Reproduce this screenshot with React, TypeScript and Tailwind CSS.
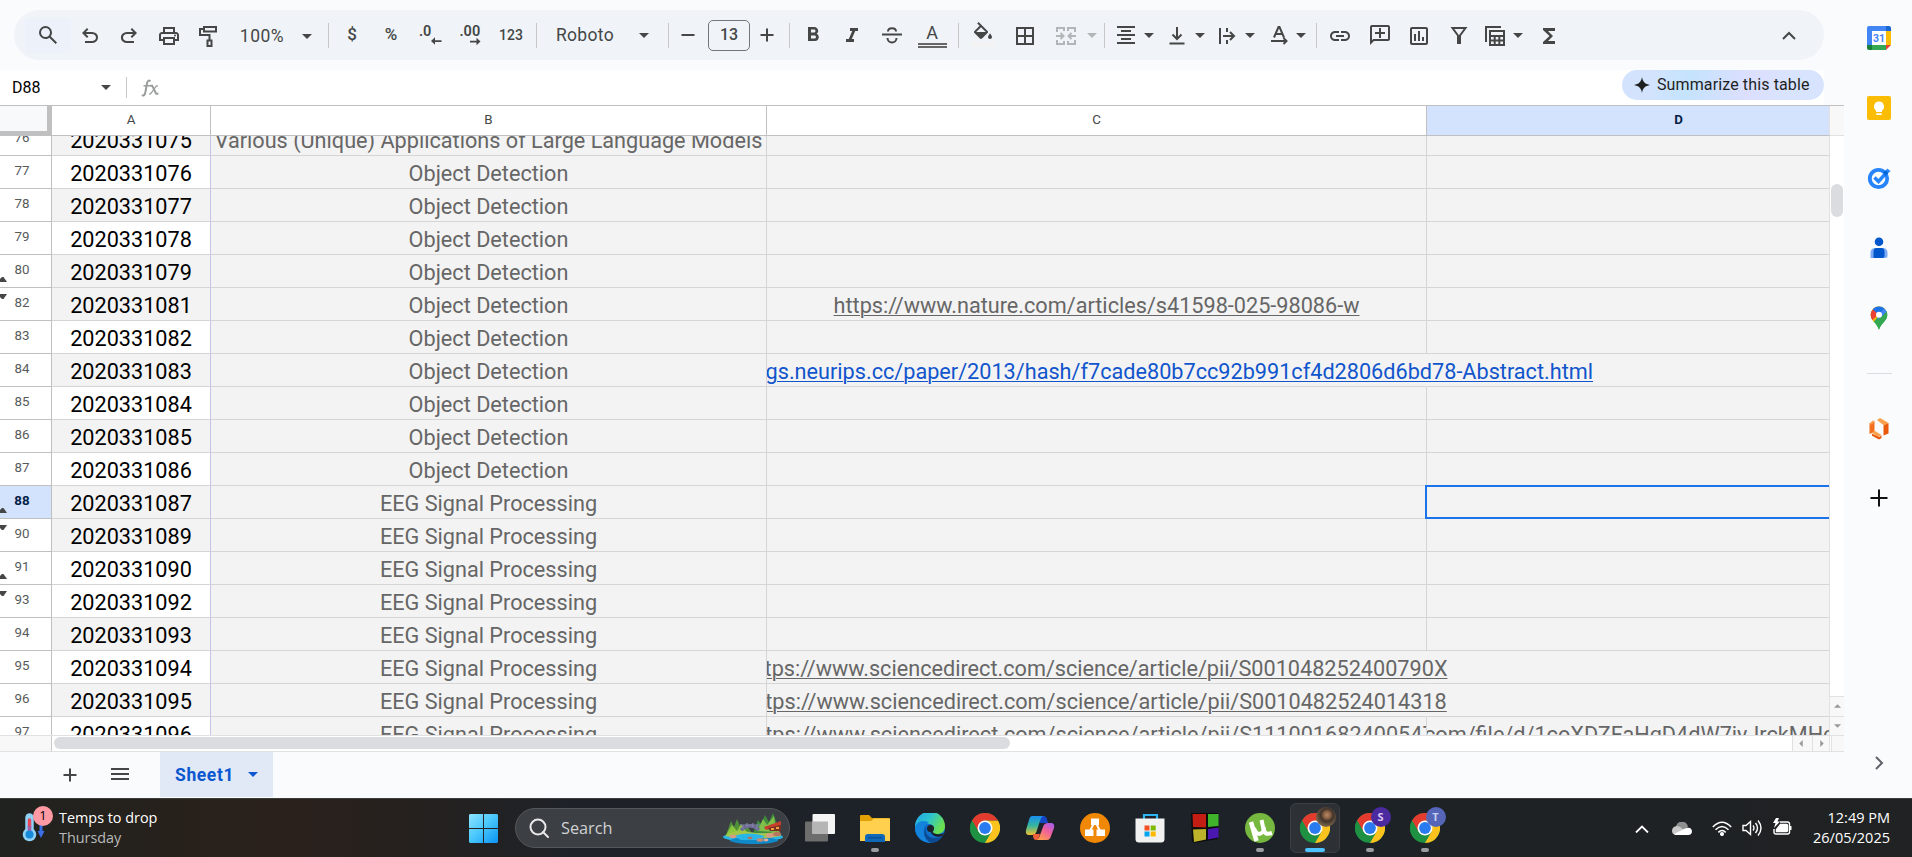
import type { ReactNode } from "react";
import {
  MdOutlinePrint,
  MdBorderAll,
  MdFormatAlignCenter,
  MdLink,
  MdOutlineAddComment,
  MdOutlineInsertChart,
  MdFormatBold,
  MdFormatItalic,
  MdFunctions,
} from "react-icons/md";

/* ---------- toolbar glyphs ---------- */

function Symbol({ d }: { d: string }) {
  return (
    <svg viewBox="0 -960 960 960" className="size-6" fill="currentColor">
      <path d={d} />
    </svg>
  );
}

function Line({ children, className = "size-6" }: { children: ReactNode; className?: string }) {
  return (
    <svg viewBox="0 0 24 24" className={className} fill="none" stroke="currentColor" strokeWidth="2">
      {children}
    </svg>
  );
}

const SEARCH =
  "M784-120 532-372q-30 24-69 38t-83 14q-109 0-184.5-75.5T120-580q0-109 75.5-184.5T380-840q109 0 184.5 75.5T640-580q0 44-14 83t-38 69l252 252-56 56ZM380-400q75 0 127.5-52.5T560-580q0-75-52.5-127.5T380-760q-75 0-127.5 52.5T200-580q0 75 52.5 127.5T380-400Z";
const UNDO =
  "M280-200v-80h284q63 0 109.5-40T720-420q0-60-46.5-100T564-560H312l104 104-56 56-200-200 200-200 56 56-104 104h252q97 0 169.5 63T800-420q0 94-72.5 157T564-200H280Z";
const REDO =
  "M396-200q-97 0-169.5-63T154-420q0-94 72.5-157T396-640h252L544-744l56-56 200 200-200 200-56-56 104-104H396q-63 0-109.5 40T240-420q0 60 46.5 100T396-280h284v80H396Z";

function Caret({ className = "" }: { className?: string }) {
  return (
    <svg viewBox="0 0 10 5" className={`h-[5px] w-[10px] shrink-0 ${className}`} fill="currentColor">
      <path d="M0 0h10L5 5z" />
    </svg>
  );
}

function Item({ className, children }: { className: string; children: ReactNode }) {
  return <div className={`flex shrink-0 items-center justify-center ${className}`}>{children}</div>;
}

function Sep({ className }: { className: string }) {
  return <div className={`h-[25px] w-px shrink-0 bg-[#c7c7c7] ${className}`} />;
}

function Toolbar() {
  return (
    <div className="ml-[14px] flex h-[50px] w-[1810px] items-center rounded-full bg-[#f0f4f9] text-[#444746]">
      <Item className="ml-[11px] h-[35px] w-[46px] bg-[#edf1fa]"><Symbol d={SEARCH} /></Item>
      <Item className="ml-[7px] w-6 pt-[2px]"><Symbol d={UNDO} /></Item>
      <Item className="ml-[15px] w-6 pt-[2px]"><Symbol d={REDO} /></Item>
      <Item className="ml-4 w-6 pt-px"><MdOutlinePrint className="size-6" /></Item>
      <Item className="ml-[15px] w-6 pt-[2px]">
        <Line>
          <path d="M8 3h12v4.500H8zM8 5H4v6h9.500v5M11.500 16.500h4V22h-4z" />
        </Line>
      </Item>
      <Item className="ml-3 w-[60px] pt-[2px] text-[17.500px] tracking-[0.500px]">100%</Item>
      <Caret className="mt-[2px] ml-[10px]" />
      <Sep className="ml-4" />
      <Item className="ml-[11px] w-6 text-[17px] font-medium">$</Item>
      <Item className="ml-[15px] w-6 text-[17px] font-medium">%</Item>
      <Item className="ml-[17px] w-6">
        <svg viewBox="0 0 24 24" className="size-6 overflow-visible" fill="currentColor">
          <text x="-1" y="12.500" fontSize="14.500" fontWeight="600">.0</text>
          <path d="M11 18l4-3.800v3h6.500v1.800H15v2.800z" />
        </svg>
      </Item>
      <Item className="ml-[15px] w-6">
        <svg viewBox="0 0 24 24" className="size-6 overflow-visible" fill="currentColor">
          <text x="0.500" y="12.500" fontSize="14.500" fontWeight="600">.00</text>
          <path d="M21.500 18.500l-4-3.800v3H11v1.800h6.500v2.800z" />
        </svg>
      </Item>
      <Item className="ml-[13px] w-[30px] text-[14px] font-medium">123</Item>
      <Sep className="ml-[10px]" />
      <div className="ml-[19px] w-[62px] shrink-0 text-[17.500px] tracking-[0.300px]">Roboto</div>
      <Caret className="ml-[21px]" />
      <Sep className="ml-[19px]" />
      <Item className="ml-[7px] w-6"><Line><path d="M5.500 12h13" /></Line></Item>
      <Item className="ml-2 h-[31px] w-[42px] rounded-[5px] border border-[#747775] text-[16px] font-medium">13</Item>
      <Item className="ml-[5px] w-6"><Line><path d="M5.500 12h13M12 5.500v13" /></Line></Item>
      <Sep className="ml-[10px]" />
      <Item className="ml-[11px] w-6"><MdFormatBold className="size-6" /></Item>
      <Item className="ml-[15px] w-6 pt-px"><MdFormatItalic className="size-6" /></Item>
      <Item className="ml-4 w-6">
        <Line>
          <path d="M2 11.500h20M8 8.500c0-4.500 8-4.500 8 0M7.500 15c0 6 9 6 9 0" />
        </Line>
      </Item>
      <div className="ml-[13px] flex w-[30px] shrink-0 flex-col items-center">
        <span className="text-[18px] leading-[20px]">A</span>
        <span className="h-[5px] w-[29px] border-y-2 border-[#666]" />
      </div>
      <Sep className="ml-[11px]" />
      <div className="ml-3 flex w-6 shrink-0 flex-col items-center pb-px">
        <svg viewBox="0 0 24 20" className="h-5 w-6" fill="currentColor">
          <path d="M16.560 8.940 7.620 0 6.210 1.410l2.380 2.380-5.150 5.150c-.59.59-.59 1.540 0 2.120l5.500 5.500c.29.29.68.44 1.060.44s.77-.15 1.060-.44l5.500-5.500c.59-.58.59-1.530 0-2.120zM5.210 10 10 5.210 14.790 10H5.210zM19 11.500s-2 2.170-2 3.500c0 1.100.9 2 2 2s2-.9 2-2c0-1.330-2-3.500-2-3.500z" />
        </svg>
        <span className="h-[5px] w-6 bg-[#f3f3f3]" />
      </div>
      <Item className="ml-[18px] w-6 pt-px"><MdBorderAll className="size-6" /></Item>
      <Item className="ml-[17px] w-6 pt-px text-[#b3b6b8]">
        <Line>
          <path d="M3 8V4h7v3M21 8V4h-7v3M3 16v4h7v-3M21 16v4h-7v-3M2 12h7M22 12h-7M6.500 9l3 3-3 3M17.500 9l-3 3 3 3" />
        </Line>
      </Item>
      <Caret className="ml-[9px] text-[#b3b6b8]" />
      <Sep className="ml-[7px]" />
      <Item className="ml-[9px] w-6"><MdFormatAlignCenter className="size-6" /></Item>
      <Caret className="ml-[6px]" />
      <Item className="ml-[11px] w-6">
        <Line>
          <path d="M4.500 20.500h15M12 4v12M7.500 11.500 12 16l4.500-4.500" />
        </Line>
      </Item>
      <Caret className="ml-[6px]" />
      <Item className="ml-[10px] w-6 pt-px">
        <Line>
          <path d="M5 4v16M12 4v4M12 16v4M8 12h11M15 8l4 4-4 4" />
        </Line>
      </Item>
      <Caret className="ml-[6px]" />
      <Item className="ml-3 w-6">
        <Line>
          <path d="M7 14.500 11.500 4h1L17 14.500M8.500 11h7M4 18h15M16.500 15l3 3-3 3" />
        </Line>
      </Item>
      <Caret className="ml-[5px]" />
      <Sep className="ml-[10px]" />
      <Item className="ml-[11px] w-6 pt-px"><MdLink className="size-6" /></Item>
      <Item className="ml-4 w-6"><MdOutlineAddComment className="size-6 -scale-x-100" /></Item>
      <Item className="ml-[15px] w-6 pt-[2px]"><MdOutlineInsertChart className="size-6" /></Item>
      <Item className="ml-4 w-6">
        <Line>
          <path d="M5.500 5h13L13 12.500V20h-2v-7.500z" />
        </Line>
      </Item>
      <Item className="ml-3 w-6 pt-px">
        <Line>
          <path d="M3 18V3h15M7 7h14v14H7zM7 12h14M7 16.500h14M11.700 12v9M16.300 12v9" />
        </Line>
      </Item>
      <Caret className="ml-[6px]" />
      <Item className="ml-[14px] w-6 pt-px"><MdFunctions className="size-6" /></Item>
      <Item className="mr-[23px] ml-auto w-6 pt-px"><Line><path d="M6 15l6-6 6 6" /></Line></Item>
    </div>
  );
}

function FormulaBar() {
  return (
    <div className="mt-[10px] flex h-[35px] w-[1824px] items-center bg-white">
      <span className="ml-3 w-[89px] text-[16px] text-black">D88</span>
      <Caret className="text-[#444746]" />
      <div className="ml-[15px] h-[21px] w-px bg-[#c7c7c7]" />
      <svg viewBox="0 0 18 18" className="mt-px ml-[14px] h-[18px] w-[18px]" fill="none" stroke="#9a9d9c">
        <path d="M9.500 2.200Q6.800.2 6 4.500L4.300 13.500Q3.600 17.400.8 16.200" strokeWidth="2" />
        <path d="M2.500 6.800h6.500" strokeWidth="1.500" />
        <path d="M9 6.800h2.200l4 8h2.200" strokeWidth="2" />
        <path d="M17 6.800h-1.500l-6 8H8" strokeWidth="1.300" />
      </svg>
      <div className="mb-[5px] ml-auto flex h-[30px] w-[202px] items-center rounded-full bg-[linear-gradient(100deg,#d3e3fd_0%,#d3e3fd_15%,#c4e3fd_33%,#dcdffe_62%,#d8e4fe_85%)] pl-[12px]">
        <svg viewBox="0 0 16 16" className="size-4" fill="#1f1f1f">
          <path d="M8 0c.8 4.800 3.200 7.200 8 8-4.800.8-7.200 3.200-8 8-.8-4.800-3.200-7.200-8-8 4.800-.8 7.200-3.200 8-8z" />
        </svg>
        <span className="ml-[7px] text-[16px] tracking-[0.120px] whitespace-nowrap text-[#1f1f1f]">Summarize this table</span>
      </div>
    </div>
  );
}

/* ---------- grid ---------- */

type Row = {
  n: number;
  id: string;
  topic: string;
  link?: string;
  blue?: boolean;
  d?: string;
  hidden?: "after" | "before";
};

const OD = "Object Detection";
const EEG = "EEG Signal Processing";

const ROWS: Row[] = [
  { n: 76, id: "2020331075", topic: "Various (Unique) Applications of Large Language Models" },
  { n: 77, id: "2020331076", topic: OD },
  { n: 78, id: "2020331077", topic: OD },
  { n: 79, id: "2020331078", topic: OD },
  { n: 80, id: "2020331079", topic: OD, hidden: "after" },
  { n: 82, id: "2020331081", topic: OD, hidden: "before", link: "https://www.nature.com/articles/s41598-025-98086-w" },
  { n: 83, id: "2020331082", topic: OD },
  {
    n: 84,
    id: "2020331083",
    topic: OD,
    blue: true,
    link: "https://proceedings.neurips.cc/paper/2013/hash/f7cade80b7cc92b991cf4d2806d6bd78-Abstract.html",
  },
  { n: 85, id: "2020331084", topic: OD },
  { n: 86, id: "2020331085", topic: OD },
  { n: 87, id: "2020331086", topic: OD },
  { n: 88, id: "2020331087", topic: EEG, hidden: "after" },
  { n: 90, id: "2020331089", topic: EEG, hidden: "before" },
  { n: 91, id: "2020331090", topic: EEG, hidden: "after" },
  { n: 93, id: "2020331092", topic: EEG, hidden: "before" },
  { n: 94, id: "2020331093", topic: EEG },
  { n: 95, id: "2020331094", topic: EEG, link: "https://www.sciencedirect.com/science/article/pii/S001048252400790X" },
  { n: 96, id: "2020331095", topic: EEG, link: "https://www.sciencedirect.com/science/article/pii/S0010482524014318" },
  {
    n: 97,
    id: "2020331096",
    topic: EEG,
    link: "https://www.sciencedirect.com/science/article/pii/S1110016824005477",
    d: "com/file/d/1coXDZFaHgD4dW7iyJrckMHg",
  },
];

function GridRow({ row }: { row: Row }) {
  const active = row.n === 88;
  const spills = !!row.link && !row.d && row.n !== 82;
  return (
    <div className="flex h-[33px] shrink-0 text-[21.670px] leading-[35px]">
      <div
        className={`relative w-[52px] shrink-0 border-r border-b border-[#c0c0c0] pr-[7px] text-center text-[13.330px] leading-[30px] ${
          active ? "bg-[#d3e3fd] font-bold text-[#041e49]" : "bg-white text-[#575a5a]"
        }`}
      >
        {row.n}
        {row.hidden === "after" && (
          <svg viewBox="0 0 7 5" className="absolute bottom-[5px] left-0 h-[5px] w-[7px]" fill="#444746">
            <path d="M0 2 2 0h1.500L7 5H0z" />
          </svg>
        )}
        {row.hidden === "before" && (
          <svg viewBox="0 0 7 5" className="absolute top-[6px] left-0 h-[5px] w-[7px]" fill="#444746">
            <path d="M0 0h7L3.500 5H2L0 3z" />
          </svg>
        )}
      </div>
      <div
        className={`w-[159px] shrink-0 border-r border-b border-r-[#c3c4e6] border-b-[#d5d5d5] text-center text-black ${
          row.n % 2 === 0 ? "bg-[#f3f3f3]" : "bg-white"
        }`}
      >
        {row.id}
      </div>
      <div className="w-[556px] shrink-0 overflow-hidden border-r border-b border-[#d5d5d5] bg-[#f3f3f3] text-center whitespace-nowrap text-[#666]">
        {row.topic}
      </div>
      <div
        className={`z-10 flex w-[660px] shrink-0 justify-center border-r border-b border-b-[#d5d5d5] whitespace-nowrap ${
          spills ? "border-r-transparent [clip-path:inset(0_-300px_0_0)]" : "overflow-hidden border-r-[#d5d5d5]"
        } ${row.blue ? "text-[#1155cc]" : "text-[#666]"}`}
      >
        <span className="underline decoration-1 underline-offset-[2px]">{row.link}</span>
      </div>
      <div className="min-w-0 flex-1 overflow-hidden border-b border-[#d5d5d5] whitespace-nowrap text-[#666]">
        <span className="-ml-[3px]">{row.d}</span>
      </div>
    </div>
  );
}

function ColumnHeaders() {
  return (
    <div className="flex h-[31px] shrink-0 border-t border-[#c0c0c0] bg-white text-[13.330px] leading-[28px] text-[#444746]">
      <div className="w-[52px] shrink-0 border-r-[5px] border-b-[5px] border-[#c0c0c0] bg-[#f8f9fa]" />
      <div className="w-[159px] shrink-0 border-r border-b border-[#c0c0c0] text-center">A</div>
      <div className="w-[556px] shrink-0 border-r border-b border-[#c0c0c0] text-center">B</div>
      <div className="w-[660px] shrink-0 border-r border-b border-[#c0c0c0] text-center">C</div>
      <div className="flex w-[403px] shrink-0 overflow-hidden border-r border-b border-r-[#e1e1e1] border-b-[#c0c0c0] bg-[#d3e3fd]">
        <span className="w-[503px] shrink-0 text-center font-bold text-[#041e49]">D</span>
      </div>
      <div className="flex-1 border-b border-[#e1e1e1] bg-[#f8f8f8]" />
    </div>
  );
}

function Grid() {
  return (
    <div className="flex h-[647px] w-[1844px] flex-col">
      <ColumnHeaders />
      <div className="flex h-[599px] shrink-0">
        <div className="relative flex w-[1830px] shrink-0 flex-col overflow-hidden border-r border-[#e1e1e1] bg-[#f3f3f3]">
          <div className="-mt-[13px] flex flex-col">
            {ROWS.map((r) => (
              <GridRow key={r.n} row={r} />
            ))}
          </div>
          <div className="absolute top-[349px] left-[1425px] z-20 h-[34px] w-[420px] border-2 border-[#1a73e8]" />
        </div>
        <div className="flex flex-1 flex-col items-center bg-white">
          <div className="mt-12 h-[33px] w-3 rounded-full bg-[#dadce0]" />
          <div className="mt-auto flex h-5 w-full items-center justify-center border-t border-[#e1e1e1] bg-[#f8f8f8] pb-[2px]">
            <svg viewBox="0 0 8 4" className="h-1 w-[7px]" fill="#999"><path d="M0 4h8L4 0z" /></svg>
          </div>
          <div className="flex h-[19px] w-full items-center justify-center border-t border-[#e1e1e1] bg-[#f8f8f8]">
            <svg viewBox="0 0 8 4" className="h-1 w-[7px]" fill="#999"><path d="M0 0h8L4 4z" /></svg>
          </div>
        </div>
      </div>
      <div className="flex h-[17px] shrink-0 border-y border-[#e1e1e1] bg-white">
        <div className="w-[52px] shrink-0 border-r border-[#c8c8c8] bg-[#f8f8f8]" />
        <div className="mt-px ml-[2px] h-3 w-[956px] rounded-full bg-[#dadce0]" />
        <div className="ml-auto flex w-5 items-center justify-center border-l border-[#e1e1e1] bg-[#f8f8f8] pr-[3px]">
          <svg viewBox="0 0 4 8" className="h-[7px] w-1" fill="#999"><path d="M4 0v8L0 4z" /></svg>
        </div>
        <div className="flex w-[18px] items-center justify-center border-x border-[#e1e1e1] bg-[#f8f8f8] pl-px">
          <svg viewBox="0 0 4 8" className="h-[7px] w-1" fill="#999"><path d="M0 0v8l4-4z" /></svg>
        </div>
        <div className="ml-px w-[13px] border-l border-[#e1e1e1] bg-[#f8f8f8]" />
      </div>
    </div>
  );
}

function SheetTabs() {
  return (
    <div className="flex h-[46px] items-start text-[#444746]">
      <svg viewBox="0 0 24 24" className="mt-[11px] ml-[58px] size-6" stroke="currentColor" strokeWidth="2"><path d="M5.500 12h13M12 5.500v13" /></svg>
      <svg viewBox="0 0 24 24" className="mt-[10px] ml-[26px] size-6" stroke="currentColor" strokeWidth="1.800"><path d="M3 7h18M3 12h18M3 17h18" /></svg>
      <div className="ml-[28px] flex h-[45px] w-[113px] items-center bg-[#e1e9f7] text-[#0b57d0]">
        <span className="ml-[15px] w-[73px] pt-px text-[17.500px] font-bold tracking-[0.600px]">Sheet1</span>
        <Caret />
      </div>
    </div>
  );
}

/* ---------- side panel ---------- */

function SidePanel() {
  return (
    <div className="flex w-[68px] flex-col items-center pt-[26px] pl-[2px]">
      <svg viewBox="0 0 24 24" className="size-6">
        <path fill="#fff" d="M5 5h14v14H5z" />
        <path fill="#4285f4" d="M2 0h17v5H5v14H0V2q0-2 2-2z" />
        <path fill="#1967d2" d="M19 0h3q2 0 2 2v3h-5z" />
        <path fill="#fbbc04" d="M19 5h5v14h-5z" />
        <path fill="#34a853" d="M5 19h14v5H5z" />
        <path fill="#188038" d="M0 19h5v5H2q-2 0-2-2z" />
        <path fill="#ea4335" d="M19 19h5l-5 5z" />
        <text x="12" y="15.800" textAnchor="middle" fontSize="10.500" fontWeight="700" fill="#4285f4">31</text>
      </svg>
      <svg viewBox="0 0 24 24" className="mt-[46px] size-6">
        <rect width="24" height="24" rx="2" fill="#fbbc04" />
        <path fill="#fff" d="M12 5.500a5 5 0 0 1 3 9V16H9v-1.500a5 5 0 0 1 3-9zM9.300 17.200h5.400V19H9.300z" />
      </svg>
      <svg viewBox="0 0 24 24" className="mt-[46px] size-6">
        <circle cx="11.500" cy="12.500" r="8.700" fill="none" stroke="#2684fc" strokeWidth="3.800" />
        <path d="M7.500 11.500l4 4L20 6" fill="none" stroke="#2684fc" strokeWidth="3.400" />
        <path d="M16 6.500l3-2.500 2.500 2.500-3 3.500z" fill="#0066da" />
        <path d="M20 2.500 23.500 5l-2 2-2.500-2.500z" fill="#2684fc" />
      </svg>
      <svg viewBox="0 0 24 24" className="mt-[46px] size-6">
        <circle cx="12" cy="5.800" r="4.300" fill="#0057cc" />
        <path fill="#7baaf7" d="M3.500 22v-5q0-5 5-5h7q5 0 5 5v3q0 2-2 2z" />
        <path fill="#0057cc" d="M6.500 22v-6q0-4 3-4h5q3 0 3 4v4q0 2-2 2z" />
      </svg>
      <svg viewBox="0 0 24 24" className="mt-[46px] size-6">
        <clipPath id="pin">
          <path d="M12 .5a8.300 8.300 0 0 1 8.300 8.300c0 6-6 8-8.300 15-2.300-7-8.300-9-8.300-15A8.300 8.300 0 0 1 12 .5z" />
        </clipPath>
        <g clipPath="url(#pin)">
          <path fill="#34a853" d="M0 0h24v24H0z" />
          <path fill="#fbbc04" d="M12 8.500 20 0 0 0v24l14-17z" />
          <path fill="#ea4335" d="M0 0h8l4 8-7.500 7H0z" />
          <path fill="#1a73e8" d="M5.500 3 12 9l8-9H5z" />
          <path fill="#4285f4" d="M17.500 2 12 9l-2 5L22 5z" />
          <path fill="#34a853" d="M20.500 4.500 6 21l6 3 12-12z" />
        </g>
        <circle cx="12" cy="8.700" r="3" fill="#fff" />
      </svg>
      <div className="mt-[43px] h-px w-[25px] bg-[#dadce0]" />
      <svg viewBox="0 0 24 24" className="mt-[43px] size-6">
        <path fill="#f4701f" d="M2.500 6.500 7.500 4v11L2.500 17z" />
        <path fill="#fb9d4b" d="M2.500 6.500 6.500 3v3L3 8z" />
        <path fill="#f9a14a" d="M10 3l3-2 8.500 5-4.500 2.500z" />
        <path fill="#e8590c" d="M16.500 8.500 21.500 6v10.500l-5 2z" />
        <path fill="#f9a14a" d="M5 15.500 8 14l6.500 4-3.500 2z" />
        <path fill="#e8590c" d="M5 16.500 12 20l2.500-1.500v2.500L12 22.500l-7-3.700z" />
      </svg>
      <svg viewBox="0 0 24 24" className="mt-[45px] size-6" stroke="#111" strokeWidth="2"><path d="M3.500 12h17M12 3.500v17" /></svg>
      <svg viewBox="0 0 24 24" className="mt-auto mb-[23px] size-6" fill="none" stroke="#5f6368" strokeWidth="2"><path d="M9 6l6 6-6 6" /></svg>
    </div>
  );
}

/* ---------- taskbar ---------- */

function Chrome() {
  return (
    <svg viewBox="0 0 30 30" className="size-[30px]">
      <circle cx="15" cy="15" r="15" fill="#1e9143" />
      <path fill="#fcc31e" d="M15 7.500h13a15 15 0 0 1-13 22.500l6.500-11.250z" />
      <path fill="#e33b2e" d="M2 7.500a15 15 0 0 1 26 0H15L8.500 18.750z" />
      <path fill="#1e9143" d="M2 7.500 8.500 18.750 15 22.500 11 29.500A15 15 0 0 1 2 7.500z" />
      <circle cx="15" cy="15" r="7.500" fill="#fff" />
      <circle cx="15" cy="15" r="5.900" fill="#2a7bf0" />
    </svg>
  );
}

function Task({ children, mark, active }: { children: ReactNode; mark?: boolean; active?: boolean }) {
  return (
    <div className="flex w-[55px] shrink-0 justify-center">
      <div
        className={`relative mt-[4px] flex size-[50px] items-center justify-center rounded-md border ${
          active ? "border-[#3b3f44] bg-[#2d3136]" : "border-transparent"
        }`}
      >
        {children}
        {(mark || active) && (
          <span
            className={`absolute bottom-0 left-1/2 h-1 -translate-x-1/2 rounded-full ${active ? "w-5 bg-[#4cc2ff]" : "w-2 bg-[#9a9c9e]"}`}
          />
        )}
      </div>
    </div>
  );
}

function Profile({ className, children }: { className: string; children?: ReactNode }) {
  return (
    <span className={`absolute top-[3px] right-[3px] flex size-5 items-center justify-center overflow-hidden rounded-full text-[11px] font-bold ${className}`}>
      {children}
    </span>
  );
}

function Scene() {
  return (
    <svg viewBox="0 0 60 31" className="h-[31px] w-[60px]">
      <ellipse cx="30" cy="24" rx="30" ry="4.500" fill="#29b6e8" />
      <ellipse cx="31" cy="27.500" rx="24" ry="3.500" fill="#1089c9" />
      <path fill="#4f8f3a" d="M3 22 8 8l3 6 3-8 5 12 4-7 7 11z" />
      <path fill="#8dc63f" d="M3 22 9 12l5 6 4-7 8 11z" />
      <path fill="#3f8a3c" d="M30 20 35 7l3 4 4-9 4 7 4-9 4 11 2 9z" />
      <path fill="#7fbf4a" d="M34 18 40 6l4 6 7-9 2 16z" />
      <path fill="#a6c64a" d="M2 23q10-7 24-4t30-1l2 5q-26 5-56 0z" />
      <path d="M18 17q9-8 18 0" fill="none" stroke="#6d6a94" strokeWidth="3.500" />
      <path d="M20 16v-4M24 14v-4M30 14v-4M34 16v-4M17 12h20" stroke="#8683ad" strokeWidth="1.200" />
      <path fill="#c63e2c" d="M41 14 58 8v4l-15 5z" />
      <path fill="#7a3025" d="M45 15l13-3v6H47z" />
      <path fill="#f0a13c" d="M48 15h3v2h-3zM53 14h3v2h-3z" />
      <path fill="#29b6e8" d="M10 23q15-5 32 0l-6 4H18z" />
      <ellipse cx="47" cy="22.500" rx="4" ry="2.200" fill="#d79a84" />
      <ellipse cx="54" cy="21" rx="4" ry="2" fill="#b8745f" />
      <ellipse cx="10" cy="23.500" rx="3.500" ry="1.700" fill="#d79a84" />
      <ellipse cx="37" cy="27" rx="3.500" ry="1.800" fill="#c98974" />
      <ellipse cx="27" cy="25" rx="2.500" ry="1.300" fill="#b8745f" />
      <ellipse cx="43" cy="27" rx="2.500" ry="1.400" fill="#dfb09e" />
    </svg>
  );
}

function Taskbar() {
  return (
    <div className="flex h-[59px] w-full border-t border-[#3b3d3c] bg-[linear-gradient(90deg,#20221f_0%,#27211c_9%,#2a211c_15%,#25211f_22%,#1e2228_30%,#1c2228_65%,#1e2224_80%,#202223_100%)] font-['Open_Sans',sans-serif] text-white">
      <div className="relative mt-[5px] ml-[22px] h-[44px] w-[31px]">
        <svg viewBox="0 0 31 44" className="h-[44px] w-[31px]">
          <path d="M7.500 13.500v14" stroke="#8fd0f5" strokeWidth="8.500" strokeLinecap="round" />
          <circle cx="7.500" cy="30.500" r="6.800" fill="#8fd0f5" />
          <path d="M7.500 16v8" stroke="#e8475b" strokeWidth="3.500" strokeLinecap="round" />
          <path d="M7.500 22v6" stroke="#a55fa5" strokeWidth="3.500" />
          <circle cx="7.500" cy="30.500" r="4" fill="#1689d8" />
          <path d="M19 20v8" stroke="#3b6fe8" strokeWidth="3" />
          <path d="M15.500 27h7L19 34z" fill="#3b6fe8" />
        </svg>
        <span className="absolute top-[2px] left-[11px] flex size-5 items-center justify-center rounded-full bg-[#ff99a4] text-[13px] text-black">1</span>
      </div>
      <div className="ml-[6px] w-[410px] pt-[9px] text-[14.400px] leading-5">
        <div>Temps to drop</div>
        <div className="text-[#b9b9b8]">Thursday</div>
      </div>
      <svg viewBox="0 0 30 30" className="mt-[15px] size-[29px]">
        <defs>
          <linearGradient id="win" x1="0" y1="0" x2="1" y2="1">
            <stop offset="0" stopColor="#8fe3ff" />
            <stop offset="0.500" stopColor="#47c6fc" />
            <stop offset="1" stopColor="#0a93f2" />
          </linearGradient>
        </defs>
        <path fill="url(#win)" d="M1 0h13.500v14.500H0V1zM15.500 0H29l1 1v13.500H15.500zM0 15.500h14.500V30H1l-1-1zM15.500 15.500H30V29l-1 1H15.500z" />
      </svg>
      <div className="mt-[9px] ml-[17px] flex h-10 w-[275px] items-center rounded-full border border-[#55585b] bg-[#3c3f43]">
        <svg viewBox="0 0 20 20" className="ml-[13px] size-5" fill="none" stroke="#e8e8e8" strokeWidth="2">
          <circle cx="9" cy="9" r="7.500" />
          <path d="m14 14 5 5" strokeLinecap="round" />
        </svg>
        <span className="ml-3 flex-1 pt-px text-[16.300px] text-[#d0d1d2]">Search</span>
        <div className="mr-[6px]"><Scene /></div>
      </div>
      <div className="ml-[2px] flex">
        <Task>
          <svg viewBox="0 0 30 28" className="h-7 w-[30px]">
            <rect y="7.500" width="23" height="20" rx="1" fill="#6d6d6d" />
            <rect x="7.500" width="22.500" height="20" rx="1" fill="#f4f4f4" />
            <rect x="7.500" y="7.500" width="15.500" height="12.500" fill="#b5b5b5" />
          </svg>
        </Task>
        <Task mark>
          <svg viewBox="0 0 30 28" className="h-7 w-[30px]">
            <path fill="#e2a004" d="M0 2q0-1 1-1h8l3 3h17q1 0 1 1v8H0z" />
            <path fill="#ffd04e" d="M0 7h11l3-2.500h15q1 0 1 1V27H0z" />
            <path fill="#1068b8" d="M5 28v-5q0-3 3-3h14q3 0 3 3v5z" />
            <path fill="#0b4f94" d="M8 23h14v1.500H8z" />
          </svg>
        </Task>
        <Task>
          <svg viewBox="0 0 30 30" className="size-[30px]">
            <defs>
              <linearGradient id="edgeTop" x1="0" y1="0" x2="1" y2="0.500">
                <stop offset="0" stopColor="#22a5e8" />
                <stop offset="0.500" stopColor="#2cc4cf" />
                <stop offset="1" stopColor="#6ce04c" />
              </linearGradient>
            </defs>
            <circle cx="15" cy="15" r="15" fill="#0f6fcb" />
            <path fill="url(#edgeTop)" d="M0 14A15 15 0 0 1 30 13c0 6-4 8-8 8-3 0-5-1-4-3 2-3 0-7-4-7-6 0-9-3-14 3z" />
            <path fill="#1483dc" d="M0 14c3-7 11-7 14-4-4 1-6 5-5 10 1 5 4 8 8 9.500A15 15 0 0 1 0 14z" />
            <path fill="#0c4a93" d="M12 13c-3 4-1 13 9 12 3 0 5-1 7-3-3 6-8 8-12 8-7-3-9-12-4-17z" />
            <circle cx="15.500" cy="15.500" r="3.500" fill="#1c2228" />
            <path fill="#1c2228" d="M17 18c2 4 8 4 12 2l-1.500 3c-5 2-11 0-12-5z" />
          </svg>
        </Task>
        <Task><Chrome /></Task>
        <Task>
          <svg viewBox="0 0 30 28" className="h-7 w-[30px]">
            <defs>
              <linearGradient id="copA" x1="0" y1="0" x2="0" y2="1">
                <stop offset="0" stopColor="#1a8ff0" />
                <stop offset="0.500" stopColor="#34b5a0" />
                <stop offset="1" stopColor="#f2c12e" />
              </linearGradient>
              <linearGradient id="copB" x1="1" y1="0" x2="0.300" y2="1">
                <stop offset="0" stopColor="#9a5bf5" />
                <stop offset="0.500" stopColor="#f0609c" />
                <stop offset="1" stopColor="#ff9a4d" />
              </linearGradient>
            </defs>
            <path fill="#1546c8" d="M13 2h6q2 0 3 3l1 4h-8z" />
            <path fill="url(#copA)" d="M7 2h11q-2 1-3 5l-3 9q-1 5-5 5H4q-4 0-3-5l3-10q1-4 3-4z" />
            <path fill="url(#copB)" d="M23 9h3q4 0 3 5l-3 8q-1 4-4 4H11q3-1 4-5l3-8q1-4 5-4z" />
            <path fill="#f0603a" d="M8 20h7l-1 3q-1 3-3 3-3 0-3-6z" />
          </svg>
        </Task>
        <Task>
          <svg viewBox="0 0 30 30" className="size-[30px]">
            <circle cx="15" cy="15" r="15" fill="#f08705" />
            <path d="M15 8 9.500 19M15 8l5.500 11" stroke="#fff" strokeWidth="2" />
            <path fill="#fff" d="M11 5.500h8V12h-8zM5 16.500h8.500V23H5zM16.500 16.500H25V23h-8.500z" />
          </svg>
        </Task>
        <Task>
          <svg viewBox="0 0 30 30" className="size-[30px]">
            <path d="M9 7V2h13v5" fill="none" stroke="#2cb5ee" strokeWidth="2.200" />
            <path fill="#f1f1f1" d="M.500 5.500h29V26q0 3.500-3.500 3.500H4Q.500 29.500.500 26z" />
            <path fill="#f25022" d="M9.500 12.500h5v5h-5z" />
            <path fill="#7fba00" d="M15.700 12.500h5v5h-5z" />
            <path fill="#00a4ef" d="M9.500 18.500h5v5h-5z" />
            <path fill="#ffb900" d="M15.700 18.500h5v5h-5z" />
          </svg>
        </Task>
        <Task>
          <svg viewBox="0 0 28 30" className="h-[30px] w-7">
            <path fill="#0c0c0c" d="M0 0h27v26L3 30 1 28z" />
            <path fill="#c41e14" d="M1.500 1H15v13.500L2 14z" />
            <path fill="#3fb52c" d="M17 1h10.500v12L17 14z" />
            <path fill="#bdb32a" d="M2 16.500 15 16v10.500L3 29z" />
            <path fill="#4a17b0" d="M17 16l10.500-1.500v10L17 26.500z" />
          </svg>
        </Task>
        <Task mark>
          <svg viewBox="0 0 30 30" className="size-[30px]">
            <circle cx="15" cy="15" r="15" fill="#76b83f" />
            <path d="M6 9l5.500 19" fill="none" stroke="#fff" strokeWidth="4.500" />
            <path d="M9 15q2 6.500 6 5.800 4.500-1 3-7L16.500 7M18.500 14l1 4.500q1.200 3.500 7.500 1.500" fill="none" stroke="#fff" strokeWidth="4" />
          </svg>
        </Task>
        <Task active>
          <Chrome />
          <Profile className="bg-[radial-gradient(circle_at_55%_40%,#b98a66_0,#8a5f44_22%,#3f342a_38%,#7a6248_70%,#b59a72_100%)]" />
        </Task>
        <Task mark>
          <Chrome />
          <Profile className="bg-[#4a2a9e] text-[#d9c8f5]">S</Profile>
        </Task>
        <Task mark>
          <Chrome />
          <Profile className="bg-[#5566b8] text-[#c9cff0]">T</Profile>
        </Task>
      </div>
      <svg viewBox="0 0 14 8" className="mt-[26px] ml-[183px] h-2 w-[14px]" fill="none" stroke="#fff" strokeWidth="1.800"><path d="m1 7.500 6-6 6 6" /></svg>
      <svg viewBox="0 0 20 13" className="mt-[23px] ml-[23px] h-[13px] w-5">
        <path fill="#8f8f8f" d="M4 6a6 6 0 0 1 12-1l-6 5z" />
        <path fill="#c9c9c9" d="M0 9q0-4.500 5-5 3 0 5 2.500l6 4L4 13Q0 12.500 0 9z" />
        <path fill="#fff" d="M2 12l8-4 3-1.500Q19 4 20 9q0 4-4 4H4q-1 0-2-1z" />
      </svg>
      <svg viewBox="0 0 20 15" className="mt-[22px] ml-[20px] h-[15px] w-5" fill="none" stroke="#fff" strokeWidth="1.500">
        <path d="M.800 6q9.200-9.500 18.400 0M3.500 8.800q6.500-6.600 13 0M6.300 11.400q3.700-3.700 7.400 0" />
        <circle cx="10" cy="13" r="1.300" fill="#fff" />
      </svg>
      <svg viewBox="0 0 20 18" className="mt-[20px] ml-[10px] h-[18px] w-5" fill="none" stroke="#fff" strokeWidth="1.400">
        <path d="M1 6.500h3L8.500 2.500v13L4 11.500H1z" />
        <path d="M11 6.500q2 2.500 0 5M13.500 4q4 5 0 10M16 1.500q6 7.500 0 15" />
      </svg>
      <svg viewBox="0 0 20 18" className="mt-[19px] ml-[10px] h-[18px] w-5" fill="none" stroke="#fff" strokeWidth="1.400">
        <path d="M8 4h7.500q2 0 2 2v8q0 2-2 2H4q-2 0-2-2v-3" />
        <path d="M8.500 6.500h6q1 0 1 1v5q0 1-1 1h-10v-2z" fill="#fff" />
        <path d="M18.500 8v4" strokeWidth="2" />
        <path d="M4 0h3L5.500 3.500H8L2 10l1.500-5H1z" fill="#fff" stroke="none" />
      </svg>
      <div className="mr-[22px] ml-auto pt-[9px] text-right text-[14.500px] leading-5 whitespace-nowrap">
        <div>12:49 PM</div>
        <div>26/05/2025</div>
      </div>
    </div>
  );
}

export default function App() {
  return (
    <div className="flex h-[857px] w-[1912px] flex-col overflow-hidden bg-[#f9fbfd] font-[Roboto,sans-serif]">
      <div className="flex h-[798px]">
        <div className="flex w-[1844px] flex-col pt-[10px]">
          <Toolbar />
          <FormulaBar />
          <Grid />
          <SheetTabs />
        </div>
        <SidePanel />
      </div>
      <Taskbar />
    </div>
  );
}
